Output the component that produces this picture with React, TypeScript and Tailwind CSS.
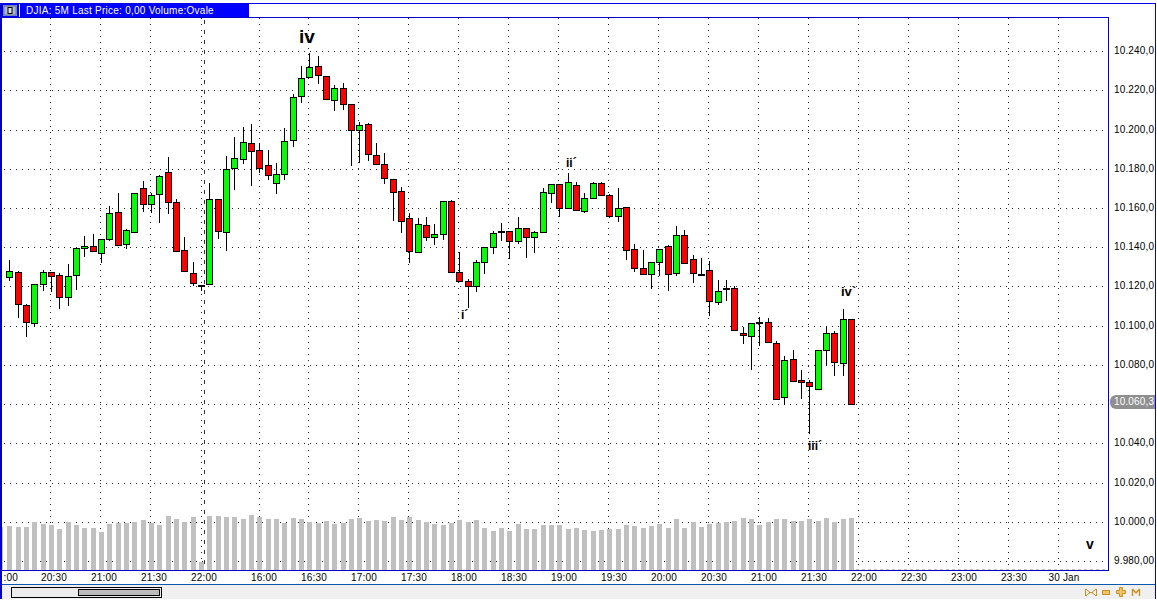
import React from 'react';

// [high, low, bodyTop, bodyBottom, colour] in page pixels
type Candle = [number, number, number, number, 'g' | 'r' | 'k'];

const candles: Candle[] = [
  [260, 281, 271, 277, 'g'], [271, 318, 272, 304, 'r'], [304, 337, 305, 322, 'r'], [284, 327, 284, 323, 'g'],
  [270, 291, 272, 284, 'g'], [272, 292, 272, 276, 'r'], [273, 309, 275, 297, 'r'], [264, 306, 276, 297, 'g'],
  [248, 290, 248, 275, 'g'], [236, 257, 246, 248, 'g'], [234, 252, 246, 251, 'r'], [239, 263, 239, 253, 'g'],
  [206, 241, 213, 239, 'g'], [193, 245, 212, 245, 'r'], [229, 249, 230, 244, 'g'], [193, 232, 193, 232, 'g'],
  [181, 212, 188, 204, 'r'], [193, 213, 195, 204, 'g'], [175, 223, 176, 194, 'g'], [157, 214, 172, 202, 'r'],
  [199, 251, 202, 251, 'r'], [237, 271, 250, 271, 'r'], [262, 286, 273, 283, 'r'], [285, 291, 285, 286, 'k'],
  [183, 284, 199, 284, 'g'], [199, 239, 199, 231, 'r'], [156, 251, 169, 232, 'g'], [137, 190, 158, 168, 'g'],
  [127, 164, 142, 159, 'g'], [124, 186, 143, 151, 'r'], [143, 173, 150, 168, 'r'], [150, 180, 165, 175, 'r'],
  [163, 194, 174, 183, 'g'], [128, 180, 141, 174, 'g'], [94, 147, 97, 140, 'g'], [66, 103, 78, 96, 'g'],
  [53, 78, 67, 77, 'g'], [56, 84, 66, 75, 'r'], [76, 99, 76, 99, 'r'], [85, 111, 88, 100, 'g'],
  [83, 110, 88, 104, 'r'], [104, 166, 104, 130, 'r'], [122, 163, 125, 130, 'g'], [123, 161, 124, 154, 'r'],
  [143, 165, 155, 164, 'r'], [153, 184, 164, 178, 'r'], [179, 221, 179, 192, 'r'], [187, 233, 191, 221, 'r'],
  [213, 263, 218, 251, 'r'], [218, 253, 224, 252, 'g'], [217, 241, 225, 237, 'r'], [224, 245, 234, 237, 'g'],
  [201, 240, 201, 234, 'g'], [200, 272, 201, 272, 'r'], [252, 282, 272, 281, 'r'], [279, 308, 281, 286, 'r'],
  [260, 292, 262, 286, 'g'], [247, 274, 247, 262, 'g'], [231, 254, 233, 247, 'g'], [223, 241, 231, 232, 'k'],
  [231, 259, 231, 241, 'r'], [217, 244, 228, 241, 'g'], [228, 258, 228, 237, 'r'], [231, 253, 232, 237, 'g'],
  [188, 232, 192, 232, 'g'], [184, 203, 184, 193, 'g'], [184, 217, 184, 208, 'r'], [173, 208, 182, 208, 'g'],
  [182, 210, 185, 210, 'r'], [193, 213, 198, 211, 'g'], [182, 198, 183, 198, 'g'], [182, 195, 183, 195, 'r'],
  [194, 218, 195, 216, 'r'], [188, 222, 208, 216, 'g'], [207, 260, 207, 250, 'r'], [244, 272, 249, 268, 'r'],
  [250, 274, 268, 274, 'r'], [262, 289, 262, 274, 'g'], [249, 276, 249, 262, 'g'], [245, 291, 246, 274, 'r'],
  [226, 276, 235, 273, 'g'], [230, 263, 235, 263, 'r'], [255, 283, 259, 273, 'r'], [258, 276, 274, 275, 'k'],
  [261, 316, 270, 301, 'r'], [280, 305, 291, 302, 'g'], [280, 301, 288, 288, 'k'], [286, 330, 288, 330, 'r'],
  [327, 344, 333, 335, 'r'], [323, 370, 323, 336, 'g'], [317, 346, 322, 323, 'k'], [318, 343, 322, 342, 'r'],
  [341, 399, 343, 399, 'r'], [356, 405, 360, 397, 'g'], [350, 381, 359, 381, 'r'], [370, 399, 380, 382, 'r'],
  [380, 434, 382, 386, 'r'], [350, 390, 350, 389, 'g'], [327, 366, 333, 350, 'g'], [331, 376, 333, 362, 'r'],
  [309, 376, 319, 363, 'g'], [319, 404, 319, 404, 'r'],
];

const volumes = [
  526, 527, 527, 522, 524, 525, 529, 522, 525, 528, 528, 532, 524, 523, 523, 522, 520,
  523, 525, 516, 519, 522, 517, 562, 516, 516, 517, 517, 519, 515, 517, 519, 519, 523,
  518, 519, 522, 523, 521, 524, 523, 519, 518, 521, 520, 521, 517, 520, 517, 520, 522,
  524, 525, 523, 520, 522, 520, 528, 531, 528, 531, 524, 529, 529, 525, 525, 525, 529,
  528, 530, 531, 530, 529, 529, 525, 526, 528, 526, 524, 528, 519, 528, 522, 527, 524,
  523, 522, 521, 518, 519, 525, 522, 519, 519, 521, 521, 519, 521, 518, 522, 519, 518,
];

const gridY = [51, 90, 130, 169, 208, 247, 286, 326, 365, 404, 443, 483, 522, 561];
const gridX = [50, 100, 150, 201, 259, 308, 358, 408, 458, 508, 558, 608, 658, 708, 758, 808, 858, 908, 958, 1008, 1058];
const prices = ['10.240,0', '10.220,0', '10.200,0', '10.180,0', '10.160,0', '10.140,0', '10.120,0', '10.100,0', '10.080,0', '10.060,0', '10.040,0', '10.020,0', '10.000,0', '9.980,00'];
const timesA = ['20:30', '21:00', '21:30', '22:00'];
const timesB = ['16:00', '16:30', '17:00', '17:30', '18:00', '18:30', '19:00', '19:30', '20:00', '20:30', '21:00', '21:30', '22:00', '22:30', '23:00', '23:30', '30 Jan'];

const candleX = (i: number) => Math.round(9.3 + i * 8.333);
const fill = { g: '#00ff00', r: '#ff0000', k: '#000000' };

const Chart = () => (
  <svg width={1106} height={552} viewBox="2 18 1106 552" shapeRendering="crispEdges" className="block">
    {gridY.map((y) => (
      <line key={y} x1={4} x2={1105} y1={y + 0.5} y2={y + 0.5} stroke="#222" strokeDasharray="1 5" />
    ))}
    {gridX.map((x) => (
      <line key={x} x1={x + 0.5} x2={x + 0.5} y1={18} y2={570} stroke="#222" strokeDasharray="1 5" />
    ))}
    {/* volume */}
    <rect x={0} y={527} width={3} height={43} fill="#c0c0c0" />
    {volumes.map((top, i) => (
      <rect key={i} x={candleX(i) - 2} y={top} width={5} height={570 - top} fill="#c0c0c0" />
    ))}
    <line x1={856} x2={1105} y1={569.5} y2={569.5} stroke="#c0c0c0" strokeDasharray="3 3" />
    {/* session break */}
    <line x1={204.5} x2={204.5} y1={20} y2={570} stroke="#333" strokeDasharray="4 6" />
    {candles.map(([high, low, top, bottom, c], i) => {
      const x = candleX(i);
      return (
        <g key={i}>
          <line x1={x + 0.5} x2={x + 0.5} y1={high} y2={low} stroke="#000" />
          <rect x={x - 2.5} y={top + 0.5} width={6} height={Math.max(bottom - top, 1)} fill={fill[c]} stroke="#000" />
        </g>
      );
    })}
  </svg>
);

const Mark = ({ className, children }: { className: string; children: React.ReactNode }) => (
  <span className={`absolute leading-none text-black whitespace-nowrap ${className}`}>{children}</span>
);

export default function App() {
  return (
    <div className="w-[1157px] h-[603px] bg-white pt-[3px] overflow-hidden font-['Liberation_Sans',Arial,sans-serif]">
      <div className="w-[1156px] h-[596px] flex flex-col border-t border-r border-l-2 border-t-[#0000e8] border-r-[#0000ff] border-l-[#0000c8]">
        {/* title */}
        <div className="h-[13px] flex shrink-0">
          <div className="w-[247px] bg-[#0000ff] flex items-center">
            <svg width={14} height={11} viewBox="0 0 14 11" className="ml-px shrink-0">
              <rect width={14} height={11} fill="#86a0c8" />
              <rect x={1} y={1} width={12} height={9} fill="#a8b8d0" stroke="#3a4a70" strokeWidth={0.6} />
              <rect x={5} y={2.5} width={4} height={6} fill="#ddd" stroke="#000" />
            </svg>
            <div className="w-px h-[13px] bg-white ml-[2px]" />
            <span className="ml-[6px] text-[10px] leading-none tracking-[0.25px] text-white whitespace-nowrap">
              DJIA: 5M Last Price: 0,00 Volume:Ovale
            </span>
          </div>
        </div>

        {/* chart and price axis */}
        <div className="h-[554px] flex shrink-0">
          <div className="relative w-[1107px] h-[554px] border-t border-r border-b border-[#0000c8]">
            <Chart />
            <Mark className="left-[297px] top-[9px] text-[19px] font-bold">iv</Mark>
            <Mark className="left-[564px] top-[139px] text-[12px] font-bold">ii´</Mark>
            <Mark className="left-[459px] top-[291px] text-[12px] font-bold">i´</Mark>
            <Mark className="left-[806px] top-[422px] text-[12px] font-bold">iii´</Mark>
            <Mark className="left-[839px] top-[267px] text-[13px] font-bold">iv`</Mark>
            <Mark className="left-[1084px] top-[519px] text-[14px] font-bold">v</Mark>
          </div>
          <div className="relative flex-1 flex flex-col pt-[14px] pl-[5px] overflow-hidden">
            {prices.map((p) => (
              <div key={p} className="h-[39.23px] shrink-0 flex items-center text-[10px] tracking-[0.15px] text-black whitespace-nowrap">
                {p}
              </div>
            ))}
            <div className="absolute left-[1px] top-[378px] w-[46px] h-[14px] pl-[4px] rounded-l-md bg-[#8f8f8f] text-[10px] tracking-[0.15px] leading-[14px] text-white whitespace-nowrap">
              10.060,3
            </div>
          </div>
        </div>

        {/* time axis */}
        <div className="h-[13px] shrink-0 flex items-center text-[10px] leading-none tracking-[0.2px] text-black whitespace-nowrap">
          <span className="w-[27px] shrink-0 pr-[11px] text-right">:00</span>
          <div className="flex">
            {timesA.map((t) => (
              <span key={t} className="w-[50px] text-center shrink-0">{t}</span>
            ))}
          </div>
          <div className="flex ml-[10px]">
            {timesB.map((t) => (
              <span key={t} className="w-[50px] text-center shrink-0">{t}</span>
            ))}
          </div>
        </div>

        {/* scroller */}
        <div className="h-[15px] shrink-0 border-t border-[#0a5ab0] bg-[#f0f0f0] flex items-center justify-between pl-[9px] pr-[13px]">
          <div className="w-[151px] h-[11px] border border-black bg-[#ececec] flex items-center pl-[66px]">
            <div className="w-[82px] h-[7px] border border-black bg-[#bcbcbc]" />
          </div>
          <div className="flex items-center gap-[3px]">
            <svg width={12} height={9} viewBox="0 0 12 9" fill="none" stroke="#c8901e" strokeWidth={1}>
              <path d="M0.5 1v7M1 1l4 3.5L1 8M11.5 1v7M11 1L7 4.5 11 8M4 4.5h4" />
            </svg>
            <svg width={12} height={9} viewBox="0 0 12 9">
              <rect x={2.5} y={2.5} width={7} height={4} fill="#eec46a" stroke="#c8901e" />
            </svg>
            <svg width={12} height={11} viewBox="0 0 12 11">
              <path d="M4.5.5h3v3h3v3h-3v3h-3v-3h-3v-3h3z" fill="#eec46a" stroke="#c8901e" />
            </svg>
            <svg width={12} height={9} viewBox="0 0 12 9" fill="none" stroke="#c8901e" strokeWidth={1.4}>
              <path d="M2.5 1v7M9.5 1v7M2.5 1L6 5l3.5-4" />
            </svg>
          </div>
        </div>
      </div>
    </div>
  );
}
